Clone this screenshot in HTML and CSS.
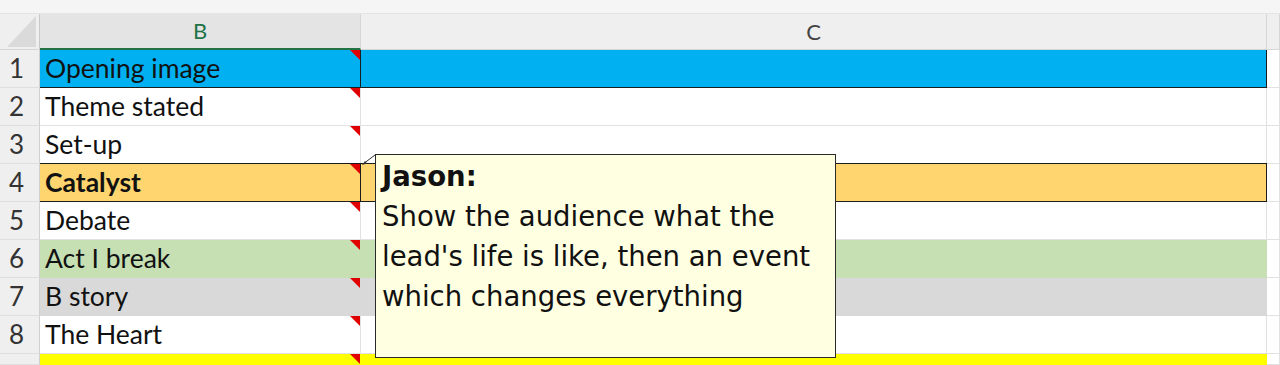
FILE: index.html
```html
<!DOCTYPE html>
<html lang="en">
<head>
    <meta charset="UTF-8">
    <meta name="viewport" content="width=device-width, initial-scale=1.0">
    <title>Beat sheet</title>
    <link rel="stylesheet" href="styles.css">
</head>
<body>
<div class="topbar"></div>
<div class="sheet">
    <!-- column headers -->
    <div class="hd corner"></div>
    <div class="hd col selected">B</div>
    <div class="hd col">C</div>
    <div class="hd col"></div>

    <div class="num">1</div>
    <div class="cell b blue boxed">Opening image</div>
    <div class="cell blue boxed"></div>
    <div class="cell"></div>

    <div class="num">2</div>
    <div class="cell b">Theme stated</div>
    <div class="cell"></div>
    <div class="cell"></div>

    <div class="num">3</div>
    <div class="cell b">Set-up</div>
    <div class="cell"></div>
    <div class="cell"></div>

    <div class="num">4</div>
    <div class="cell b orange boxed top bold">Catalyst</div>
    <div class="cell orange boxed top"></div>
    <div class="cell"></div>

    <div class="num">5</div>
    <div class="cell b">Debate</div>
    <div class="cell"></div>
    <div class="cell"></div>

    <div class="num">6</div>
    <div class="cell b green">Act I break</div>
    <div class="cell green"></div>
    <div class="cell"></div>

    <div class="num">7</div>
    <div class="cell b grey">B story</div>
    <div class="cell grey"></div>
    <div class="cell"></div>

    <div class="num">8</div>
    <div class="cell b">The Heart</div>
    <div class="cell"></div>
    <div class="cell"></div>

    <!-- row 9, only the top edge is visible -->
    <div class="num"></div>
    <div class="cell b yellow"></div>
    <div class="cell yellow"></div>
    <div class="cell"></div>
</div>

<!-- comment popup for B4 -->
<svg class="connector" width="20" height="16" viewBox="0 0 20 16">
    <line x1="3" y1="12" x2="15" y2="3" stroke="#333" stroke-width="1"/>
    <path d="M2 13 L7 11.5 L5 9 Z" fill="#333"/>
</svg>
<div class="comment">
    <b>Jason:</b><br>
    Show the audience what the<br>
    lead's life is like, then an event<br>
    which changes everything
</div>
</body>
</html>
```

FILE: styles.css
```css
body {
    margin: 0;
    height: 365px;
    overflow: hidden;
    background: #fff;
    font-family: Lato, "Open Sans", sans-serif;
}
.topbar {
    height: 13px;
    background: #f5f5f5;
    border-bottom: 1px solid #e4e4e4;
}
.sheet {
    display: grid;
    grid-template-columns: 40px 321px 906px 13px;
    grid-template-rows: 36px repeat(8, 38px) 11px;
}
.hd {
    background: #efefef;
    border-right: 1px solid #d6d6d6;
    border-bottom: 1px solid #d6d6d6;
    box-sizing: border-box;
}
.corner {
    position: relative;
    border-right-color: #c8c8c8;
}
.corner::after {
    content: "";
    position: absolute;
    right: 3px;
    bottom: 2px;
    width: 0;
    height: 0;
    border-left: 29px solid transparent;
    border-bottom: 31px solid #dadada;
}
.col {
    text-align: center;
    font-size: 22px;
    line-height: 35px;
    color: #444;
}
.col.selected {
    background: #e4e4e4;
    color: #217346;
    border-bottom: 2px solid #217346;
    line-height: 34px;
}
.num {
    background: #efefef;
    border-right: 1px solid #d0d0d0;
    border-bottom: 1px solid #dedede;
    box-sizing: border-box;
    padding-left: 9px;
    font-size: 26px;
    line-height: 37px;
    color: #333;
}
.cell {
    position: relative;
    box-sizing: border-box;
    border-right: 1px solid #e1e1e1;
    border-bottom: 1px solid #e1e1e1;
    padding-left: 5px;
    font-size: 26.5px;
    line-height: 37px;
    color: #111;
    white-space: nowrap;
}
.bold {
    font-weight: bold;
}
/* red comment marker */
.cell.b::after {
    content: "";
    position: absolute;
    top: 0;
    right: 0;
    width: 0;
    height: 0;
    border-left: 10px solid transparent;
    border-top: 10px solid #e00000;
}
.blue { background: #00b0f0; border-color: #00b0f0; }
.orange { background: #fed56e; border-color: #fed56e; }
.green { background: #c6e0b4; border-color: #c6e0b4; }
.grey { background: #d9d9d9; border-color: #d9d9d9; }
.yellow { background: #ffff00; border-color: #ffff00; }
.boxed {
    border-right-color: #1c1c1c;
    border-bottom-color: #1c1c1c;
}
.top {
    box-shadow: 0 -1px 0 #1c1c1c;
}
.connector {
    position: absolute;
    left: 360px;
    top: 152px;
}
.comment {
    position: absolute;
    left: 375px;
    top: 154px;
    width: 461px;
    height: 204px;
    box-sizing: border-box;
    background: #ffffe1;
    border: 1px solid #2a2a2a;
    padding: 1px 0 0 6px;
    font-family: "DejaVu Sans", Verdana, sans-serif;
    font-size: 27.5px;
    line-height: 40px;
    color: #111;
    white-space: nowrap;
}
```
